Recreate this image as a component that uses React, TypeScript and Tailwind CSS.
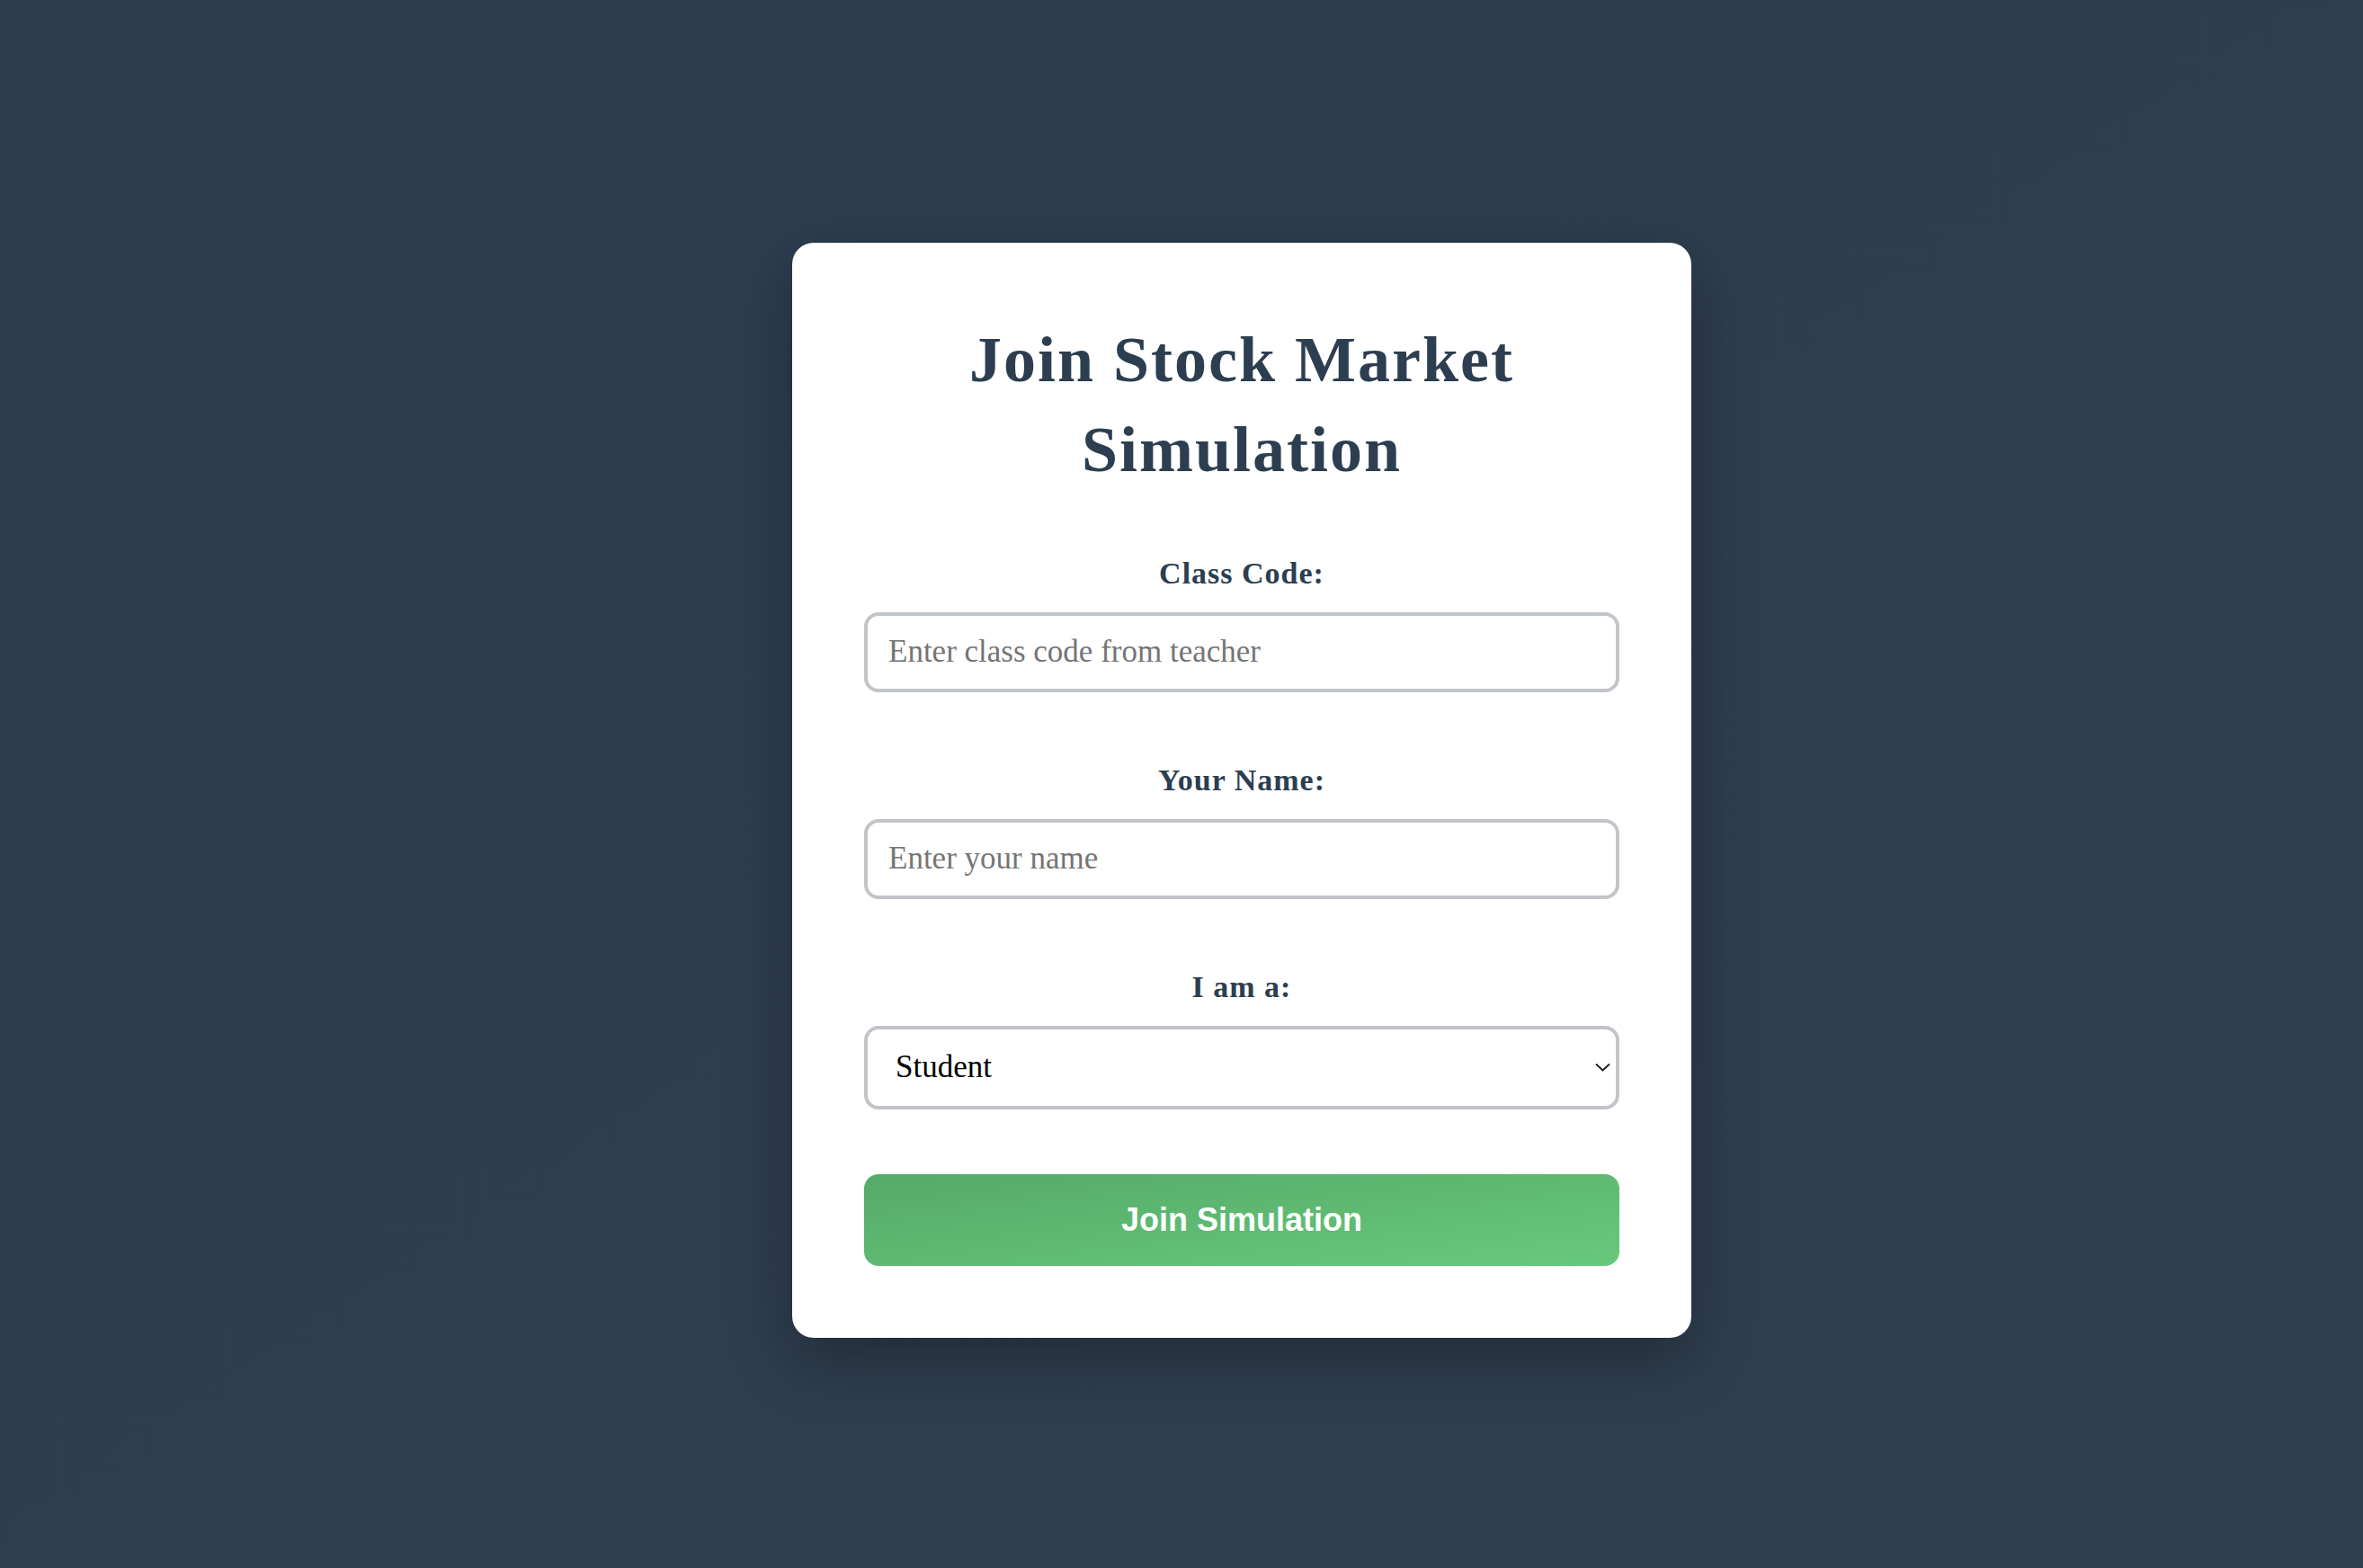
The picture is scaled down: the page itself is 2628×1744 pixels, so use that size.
import React, { useState } from 'react';

const serif = "font-['Liberation_Serif',Georgia,serif]";

const Field = ({ label, children }: { label: string; children: React.ReactNode }) => (
    <div className="flex flex-col">
        <label className={`${serif} block text-center text-[34px] leading-[51px] tracking-[1px] font-bold text-[#2c3e50] mb-[18px]`}>
            {label}
        </label>
        {children}
    </div>
);

export default function App() {
    const [code, setCode] = useState('');
    const [name, setName] = useState('');
    const [role, setRole] = useState('student');

    return (
        <div className="min-h-screen w-full bg-gradient-to-br from-[#2d3d4f] to-[#2f3f51] flex items-center justify-center pl-[134px] pt-[13px]">
            <div className="w-[1000px] bg-white rounded-[24px] px-[80px] pt-[80px] pb-[80px] shadow-[0_24px_70px_rgba(0,0,0,0.32)]">
                <h1 className={`${serif} text-center font-bold text-[72px] leading-[100px] tracking-[2px] text-[#2c3e50] mb-[62px]`}>
                    Join Stock Market Simulation
                </h1>

                <div className="flex flex-col gap-[72px]">
                    <Field label="Class Code:">
                        <input
                            value={code}
                            onChange={(e) => setCode(e.target.value)}
                            placeholder="Enter class code from teacher"
                            className={`${serif} h-[89px] w-full rounded-[16px] border-[4px] border-[#c1c5c9] px-[23px] text-[35px] text-black placeholder:text-[#757575] outline-none`}
                        />
                    </Field>

                    <Field label="Your Name:">
                        <input
                            value={name}
                            onChange={(e) => setName(e.target.value)}
                            placeholder="Enter your name"
                            className={`${serif} h-[89px] w-full rounded-[16px] border-[4px] border-[#c1c5c9] px-[23px] text-[35px] text-black placeholder:text-[#757575] outline-none`}
                        />
                    </Field>

                    <Field label="I am a:">
                        <div className="relative">
                            <select
                                value={role}
                                onChange={(e) => setRole(e.target.value)}
                                className={`${serif} h-[93px] w-full appearance-none rounded-[16px] border-[4px] border-[#c1c5c9] bg-white pl-[31px] pr-[60px] text-[35px] text-black outline-none`}
                            >
                                <option value="student">Student</option>
                                <option value="teacher">Teacher</option>
                            </select>
                            {/* chevron for the select */}
                            <svg
                                className="pointer-events-none absolute right-[10px] top-1/2 -translate-y-1/2"
                                width="17"
                                height="10"
                                viewBox="0 0 17 10"
                                fill="none"
                            >
                                <path d="M1 1.5 L8.5 8.5 L16 1.5" stroke="#1a1a1a" strokeWidth="1.8" />
                            </svg>
                        </div>
                    </Field>

                    <button className="h-[102px] w-full rounded-[16px] bg-gradient-to-br from-[#55aa68] to-[#67c97d] font-['Liberation_Sans',Arial,sans-serif] text-[36px] font-bold text-white">
                        Join Simulation
                    </button>
                </div>
            </div>
        </div>
    );
}
